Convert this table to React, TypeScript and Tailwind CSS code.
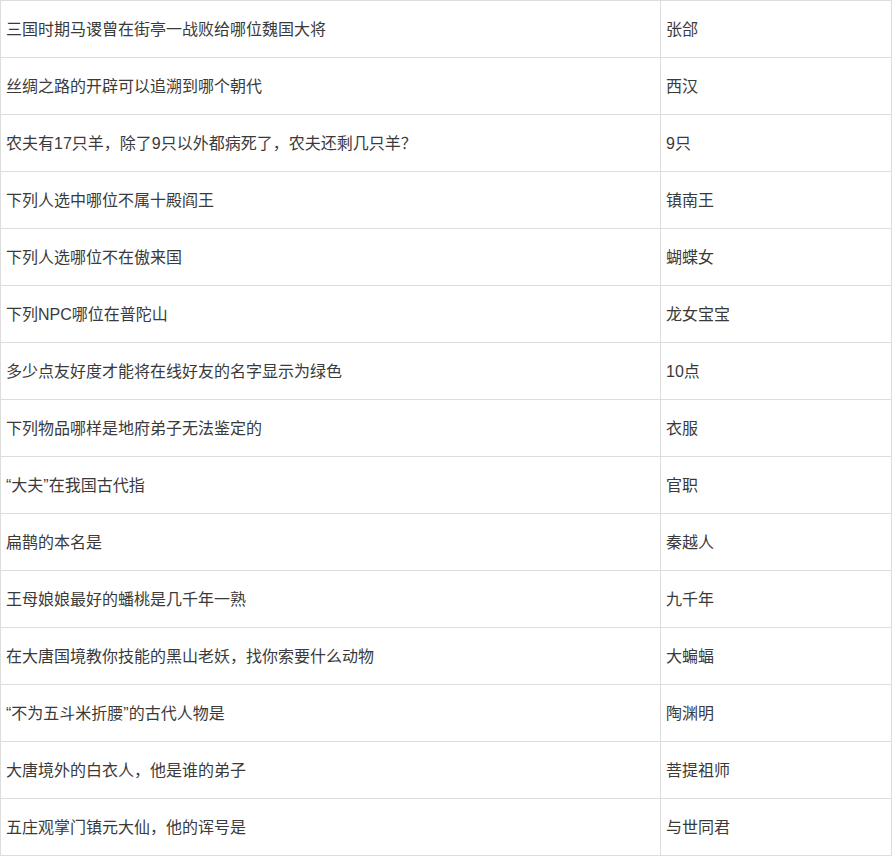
const rows: [string, string][] = [
  ["三国时期马谡曾在街亭一战败给哪位魏国大将", "张郃"],
  ["丝绸之路的开辟可以追溯到哪个朝代", "西汉"],
  ["农夫有17只羊，除了9只以外都病死了，农夫还剩几只羊？", "9只"],
  ["下列人选中哪位不属十殿阎王", "镇南王"],
  ["下列人选哪位不在傲来国", "蝴蝶女"],
  ["下列NPC哪位在普陀山", "龙女宝宝"],
  ["多少点友好度才能将在线好友的名字显示为绿色", "10点"],
  ["下列物品哪样是地府弟子无法鉴定的", "衣服"],
  ["“大夫”在我国古代指", "官职"],
  ["扁鹊的本名是", "秦越人"],
  ["王母娘娘最好的蟠桃是几千年一熟", "九千年"],
  ["在大唐国境教你技能的黑山老妖，找你索要什么动物", "大蝙蝠"],
  ["“不为五斗米折腰”的古代人物是", "陶渊明"],
  ["大唐境外的白衣人，他是谁的弟子", "菩提祖师"],
  ["五庄观掌门镇元大仙，他的诨号是", "与世同君"],
];

export default function App() {
  return (
    <div className="bg-white w-[896px] h-[856px] overflow-hidden">
      <table
        className="w-[892px] border-collapse table-fixed text-[16px] text-[#3a3a3a]"
        style={{ fontFamily: '"Liberation Sans", "Noto Sans CJK SC", sans-serif' }}
      >
        <colgroup>
          <col className="w-[660px]" />
          <col />
        </colgroup>
        <tbody>
          {rows.map(([q, a], i) => (
            <tr key={i} className="h-[57px]">
              <td className="border border-[#dddddd] px-[5px] pt-[2px] align-middle leading-none">{q}</td>
              <td className="border border-[#dddddd] px-[5px] pt-[2px] align-middle leading-none">{a}</td>
            </tr>
          ))}
        </tbody>
      </table>
    </div>
  );
}
